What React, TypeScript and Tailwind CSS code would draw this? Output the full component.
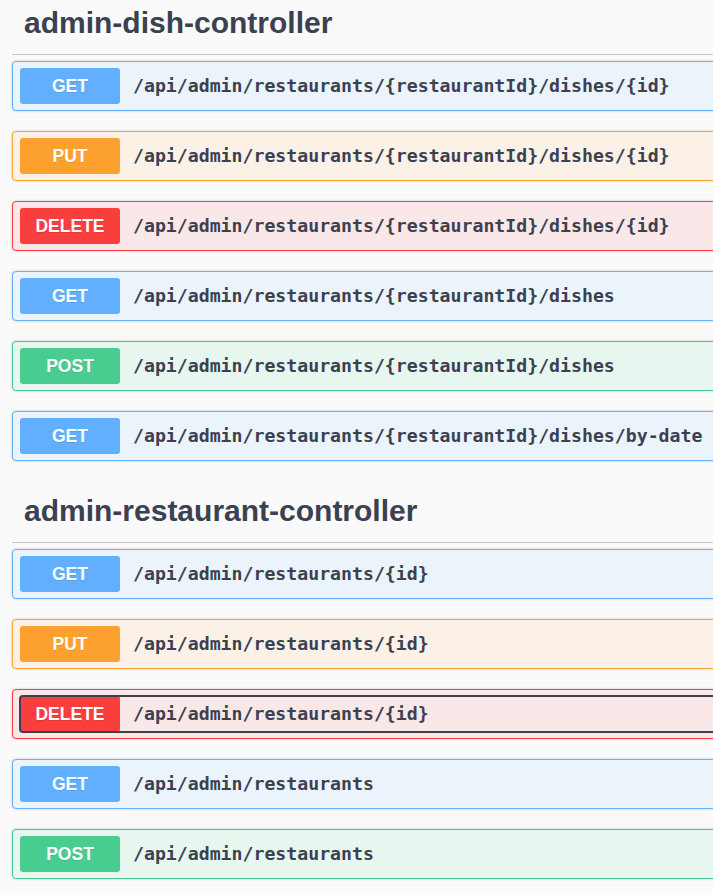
import React from 'react';

type Method = 'GET' | 'PUT' | 'DELETE' | 'POST';

const methodStyles: Record<Method, { block: string; badge: string }> = {
  GET: { block: 'bg-[#ebf3fb] border-[#61affe]', badge: 'bg-[#61affe]' },
  PUT: { block: 'bg-[#fbf1e6] border-[#fca130]', badge: 'bg-[#fca130]' },
  DELETE: { block: 'bg-[#fae7e7] border-[#f93e3e]', badge: 'bg-[#f93e3e]' },
  POST: { block: 'bg-[#e8f6f0] border-[#49cc90]', badge: 'bg-[#49cc90]' },
};

type Op = { method: Method; path: string; focused?: boolean };

const sections: { name: string; ops: Op[] }[] = [
  {
    name: 'admin-dish-controller',
    ops: [
      { method: 'GET', path: '/api/admin/restaurants/{restaurantId}/dishes/{id}' },
      { method: 'PUT', path: '/api/admin/restaurants/{restaurantId}/dishes/{id}' },
      { method: 'DELETE', path: '/api/admin/restaurants/{restaurantId}/dishes/{id}' },
      { method: 'GET', path: '/api/admin/restaurants/{restaurantId}/dishes' },
      { method: 'POST', path: '/api/admin/restaurants/{restaurantId}/dishes' },
      { method: 'GET', path: '/api/admin/restaurants/{restaurantId}/dishes/by-date' },
    ],
  },
  {
    name: 'admin-restaurant-controller',
    ops: [
      { method: 'GET', path: '/api/admin/restaurants/{id}' },
      { method: 'PUT', path: '/api/admin/restaurants/{id}' },
      { method: 'DELETE', path: '/api/admin/restaurants/{id}', focused: true },
      { method: 'GET', path: '/api/admin/restaurants' },
      { method: 'POST', path: '/api/admin/restaurants' },
    ],
  },
];

const OpBlock: React.FC<{ op: Op }> = ({ op }) => {
  const s = methodStyles[op.method];
  return (
    <div
      className={`h-[50px] w-[740px] border rounded-[4px] pl-[7px] pt-[6px] shadow-[0_0_3px_rgba(0,0,0,0.19)] ${s.block}`}
    >
      <div
        className={`flex items-center h-[36px] rounded-[3px] ${
          op.focused ? 'outline-2 outline-offset-[-1px] outline-[#3b4151]' : ''
        }`}
      >
        <span
          className={`w-[100px] h-[36px] flex items-center justify-center rounded-[3px] text-white font-bold text-[17.5px] [text-shadow:0_1px_0_rgba(0,0,0,0.1)] ${s.badge}`}
          style={{ fontFamily: '"Liberation Sans", Arial, sans-serif' }}
        >
          {op.method}
        </span>
        <span
          className="ml-[13px] text-[18.2px] font-bold text-[#3b4151] whitespace-nowrap"
          style={{ fontFamily: '"DejaVu Sans Mono", monospace' }}
        >
          {op.path}
        </span>
      </div>
    </div>
  );
};

export default function App() {
  return (
    <div
      className="w-[713px] h-[893px] overflow-hidden bg-[#fafafa]"
      style={{ fontFamily: '"Liberation Sans", Arial, sans-serif' }}
    >
      <div className="pl-[12px]">
        {sections.map((sec, i) => (
          <section key={sec.name} className={i > 0 ? 'mt-[27px]' : ''}>
            <h3 className="pt-[5px] pb-[13px] pl-[12px] w-[740px] border-b border-[#c8c9cc] text-[30px] leading-[36px] font-bold text-[#3b4151]">
              {sec.name}
            </h3>
            <div className="mt-[6px] flex flex-col gap-[20px]">
              {sec.ops.map((op, j) => (
                <OpBlock key={j} op={op} />
              ))}
            </div>
          </section>
        ))}
      </div>
    </div>
  );
}
